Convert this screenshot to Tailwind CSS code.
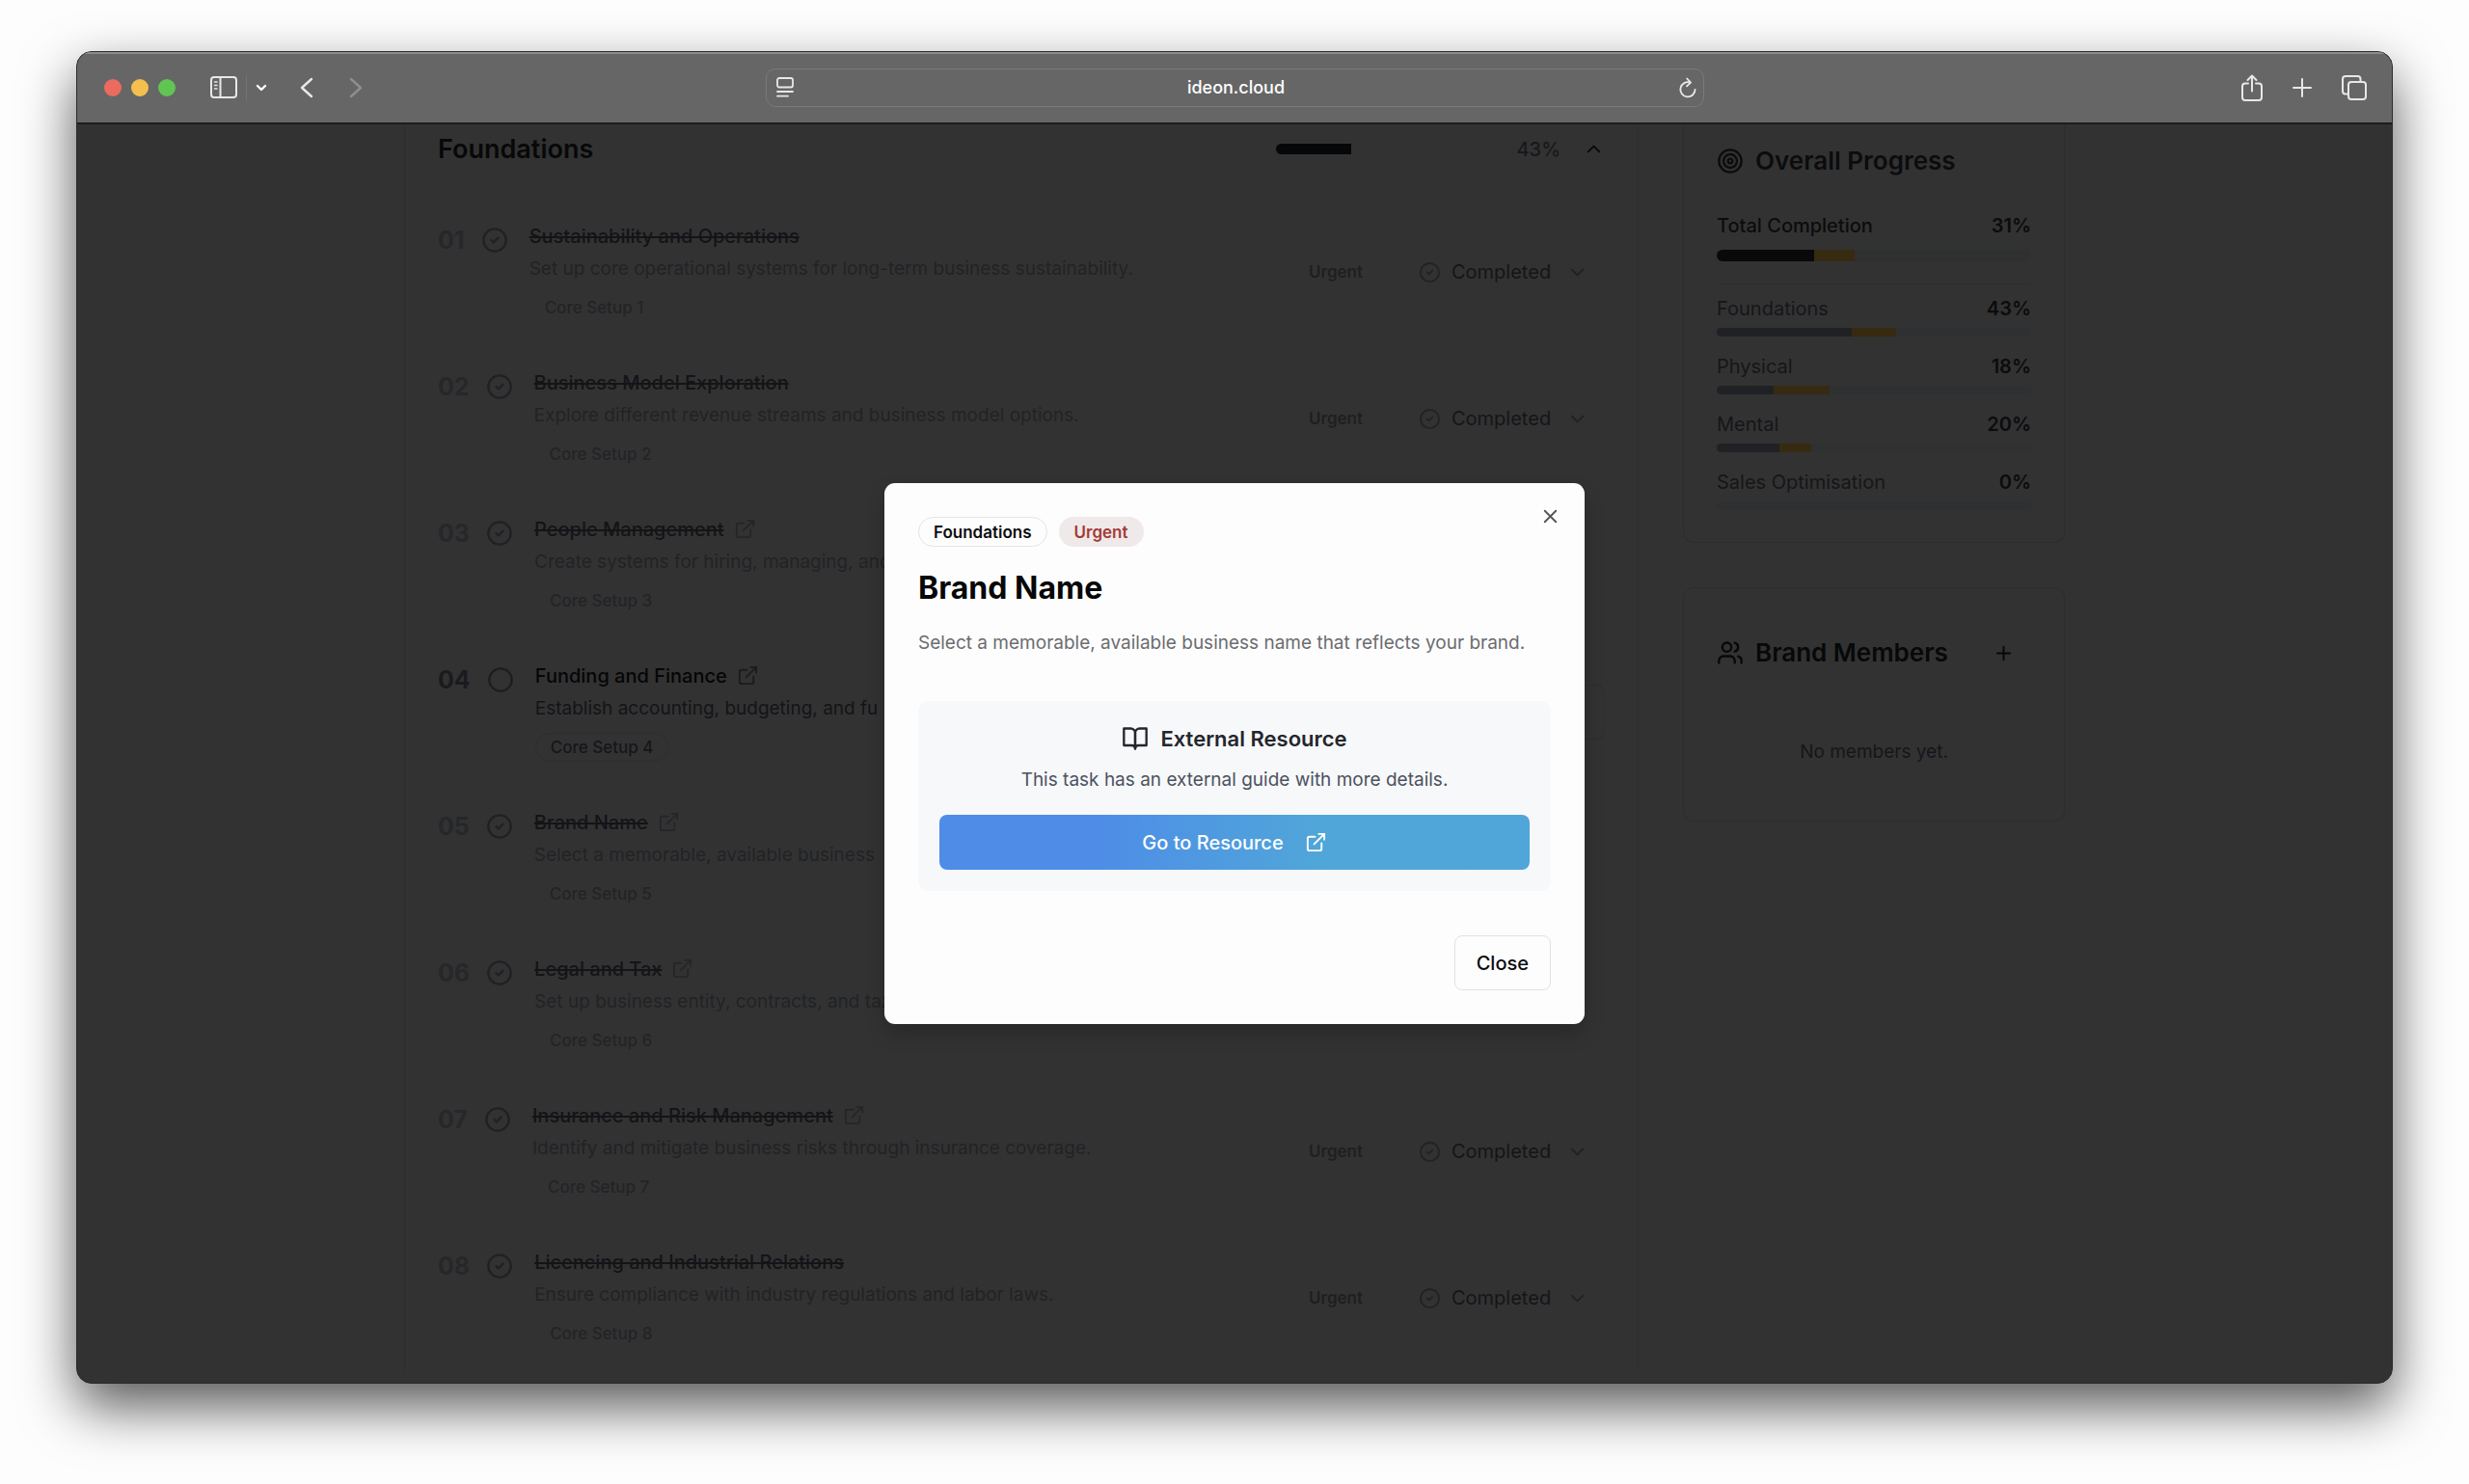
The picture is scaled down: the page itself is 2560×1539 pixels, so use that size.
<!DOCTYPE html>
<html lang="en">
<head>
    <meta charset="UTF-8">
    <meta name="viewport" content="width=device-width, initial-scale=1.0">
    <title>Foundations - Ideon</title>
    <script src="https://cdn.jsdelivr.net/npm/@tailwindcss/browser@4"></script>
    <style>
        body {
            font-family: Inter, "Liberation Sans", sans-serif;
        }
    </style>
</head>
<body class="flex h-screen flex-col bg-[#fdfdfd] px-[79px] pt-[53px] pb-[104px]">

    <!-- Icon sprite -->
    <svg class="hidden" xmlns="http://www.w3.org/2000/svg">
        <symbol id="check" viewBox="0 0 24 24"><circle cx="12" cy="12" r="10"/><path d="m9 12 2 2 4-4"/></symbol>
        <symbol id="circle" viewBox="0 0 24 24"><circle cx="12" cy="12" r="10"/></symbol>
        <symbol id="external" viewBox="0 0 24 24"><path d="M15 3h6v6"/><path d="M10 14 21 3"/><path d="M18 13v6a2 2 0 0 1-2 2H5a2 2 0 0 1-2-2V8a2 2 0 0 1 2-2h6"/></symbol>
        <symbol id="down" viewBox="0 0 24 24"><path d="m6 9 6 6 6-6"/></symbol>
        <symbol id="up" viewBox="0 0 24 24"><path d="m18 15-6-6-6 6"/></symbol>
        <symbol id="plus" viewBox="0 0 24 24"><path d="M5 12h14"/><path d="M12 5v14"/></symbol>
        <symbol id="close" viewBox="0 0 24 24"><path d="M18 6 6 18"/><path d="m6 6 12 12"/></symbol>
        <symbol id="target" viewBox="0 0 24 24"><circle cx="12" cy="12" r="10"/><circle cx="12" cy="12" r="6"/><circle cx="12" cy="12" r="2"/></symbol>
        <symbol id="users" viewBox="0 0 24 24"><path d="M16 21v-2a4 4 0 0 0-4-4H6a4 4 0 0 0-4 4v2"/><circle cx="9" cy="7" r="4"/><path d="M22 21v-2a4 4 0 0 0-3-3.87"/><path d="M16 3.13a4 4 0 0 1 0 7.75"/></symbol>
        <symbol id="book" viewBox="0 0 24 24"><path d="M2 3h6a4 4 0 0 1 4 4v14a3 3 0 0 0-3-3H2z"/><path d="M22 3h-6a4 4 0 0 0-4 4v14a3 3 0 0 1 3-3h7z"/></symbol>
    </svg>

    <div class="flex min-h-0 flex-1 flex-col overflow-hidden rounded-[16px] border border-[#2b2b2b] bg-[#323232] shadow-[0_24px_56px_rgba(0,0,0,0.65)]">

        <!-- Browser toolbar -->
        <header class="grid h-[75px] shrink-0 grid-cols-[1fr_973px_1fr] items-center border-t-2 border-b-2 border-t-[#8c8c8c] border-b-[#1c1c1e] bg-[#666666] pb-[2px] text-[#e8e8e8]">
            <div class="flex items-center pl-[28px]">
                <div class="flex gap-[10px]">
                    <span class="size-[18px] rounded-full bg-[#ed6a5e]"></span>
                    <span class="size-[18px] rounded-full bg-[#f4bf4f]"></span>
                    <span class="size-[18px] rounded-full bg-[#61c554]"></span>
                </div>
                <button class="ml-[36px]" aria-label="Sidebar">
                    <svg class="h-[23px] w-[28px]" viewBox="0 0 28 23" fill="none" stroke="currentColor" stroke-width="2" stroke-linecap="round"><rect x="1" y="1" width="26" height="21" rx="3"/><path d="M10.500 1v21"/><path d="M4.500 6h2.500M4.500 9.500h2.500M4.500 13h2.500" stroke-width="1.500"/></svg>
                </button>
                <span class="ml-[9px] h-[26px] w-px bg-[#747474]"></span>
                <button class="ml-[9px]" aria-label="Tab groups">
                    <svg class="h-[8px] w-[12px]" viewBox="0 0 12 8" fill="none" stroke="#fff" stroke-width="2.400" stroke-linecap="round" stroke-linejoin="round"><path d="m2 2 4 4 4-4"/></svg>
                </button>
                <button class="ml-[34px]" aria-label="Back">
                    <svg class="h-[22px] w-[14px]" viewBox="0 0 14 22" fill="none" stroke="currentColor" stroke-width="2.400" stroke-linecap="round" stroke-linejoin="round"><path d="M12 2 2 11l10 9"/></svg>
                </button>
                <button class="ml-[37px] text-[#8e8e8e]" aria-label="Forward">
                    <svg class="h-[22px] w-[14px]" viewBox="0 0 14 22" fill="none" stroke="currentColor" stroke-width="2.400" stroke-linecap="round" stroke-linejoin="round"><path d="m2 2 10 9-10 9"/></svg>
                </button>
            </div>
            <div class="flex h-[40px] items-center rounded-[10px] border border-[#7a7a7a] pr-[7px] pl-[10px]">
                <svg class="h-[21px] w-[18px]" viewBox="0 0 18 21" fill="none" stroke="currentColor" stroke-width="1.800" stroke-linecap="round"><rect x="1" y="1" width="16" height="9.500" rx="2"/><path d="M1 15h16M1 19.700h11"/></svg>
                <input class="min-w-0 flex-1 bg-transparent text-center text-[18px] font-medium text-white" aria-label="Address" value="ideon.cloud">
                <button aria-label="Reload">
                    <svg class="h-[22px] w-[18px]" viewBox="0 0 18 22" fill="none" stroke="currentColor" stroke-width="1.800" stroke-linecap="round" stroke-linejoin="round"><path d="M11.500 5.600A7.600 7.600 0 1 0 16.600 12.800"/><path d="M8.200 1.500 12 5.700 8 9.300"/></svg>
                </button>
            </div>
            <div class="flex items-center justify-end gap-[31px] pr-[26px]">
                <button aria-label="Share">
                    <svg class="h-[28px] w-[22px]" viewBox="0 0 22 28" fill="none" stroke="currentColor" stroke-width="2" stroke-linecap="round" stroke-linejoin="round"><path d="M7 9.500H4a3 3 0 0 0-3 3V24a3 3 0 0 0 3 3h14a3 3 0 0 0 3-3V12.500a3 3 0 0 0-3-3h-3M11 17.500V2M6.500 6 11 1.500 15.500 6"/></svg>
                </button>
                <button aria-label="New tab">
                    <svg class="size-[20px]" viewBox="0 0 20 20" fill="none" stroke="currentColor" stroke-width="2" stroke-linecap="round"><path d="M10 1v18M1 10h18"/></svg>
                </button>
                <button aria-label="Tab overview">
                    <svg class="size-[26px]" viewBox="0 0 26 26" fill="none" stroke="currentColor" stroke-width="2" stroke-linecap="round"><rect x="7" y="7" width="18" height="18" rx="3"/><path d="M7 19.500H4a3 3 0 0 1-3-3V4a3 3 0 0 1 3-3h12.500a3 3 0 0 1 3 3v3"/></svg>
                </button>
            </div>
        </header>

        <div class="relative min-h-0 flex-1 overflow-hidden">
            <main class="mx-auto grid max-w-[1722px] grid-cols-[1fr_396px] gap-[46px] text-[20px] leading-[28px]">

                <section class="border-x border-[#2c2d2e] px-[34px]">
                    <div class="flex h-[51px] items-center">
                        <h2 class="flex-1 text-[27px] font-semibold text-[#070809]">Foundations</h2>
                        <div class="h-[11px] w-[181px] overflow-hidden rounded-full">
                            <div class="h-full bg-[#060708]" style="width: 43%"></div>
                        </div>
                        <span class="w-[114px] text-right font-medium text-[#17181c]">43%</span>
                        <button class="ml-[23px]" aria-label="Collapse">
                            <svg class="size-[23px]" fill="none" stroke="#070809" stroke-width="2" stroke-linecap="round" stroke-linejoin="round"><use href="#up"/></svg>
                        </button>
                    </div>
                    <ul id="taskList" class="pt-[26px]"></ul>
                </section>

                <aside class="flex flex-col gap-[46px]">
                    <section class="rounded-b-[11px] border border-t-0 border-[#2c2d2e] px-[34px] pb-[33px]">
                        <h2 class="flex h-[75px] items-center gap-[12px] text-[26px] font-semibold text-[#0b0c0e]">
                            <svg class="size-[28px]" fill="none" stroke="currentColor" stroke-width="2"><use href="#target"/></svg>
                            Overall Progress
                        </h2>
                        <div class="mt-[16px] flex justify-between font-medium text-[#0b0c0e]">
                            <span>Total Completion</span>
                            <span class="font-semibold">31%</span>
                        </div>
                        <div class="mt-[11px] flex h-[12px] overflow-hidden rounded-full bg-[#2e3032]">
                            <div class="bg-[#08090a]" style="width: 31%"></div>
                            <div class="bg-[#362b11]" style="width: 13%"></div>
                        </div>
                        <div id="progressList" class="mt-[23px] flex flex-col gap-[17px] border-t border-[#2d2e2f] pt-[11px]"></div>
                    </section>

                    <section class="rounded-[11px] border border-[#2c2d2e] px-[34px] pt-[34px] pb-[57px]">
                        <div class="flex h-[66px] items-center justify-between">
                            <h2 class="flex items-center gap-[12px] text-[26px] font-semibold text-[#070809]">
                                <svg class="size-[28px]" fill="none" stroke="currentColor" stroke-width="2" stroke-linecap="round" stroke-linejoin="round"><use href="#users"/></svg>
                                Brand Members
                            </h2>
                            <button class="flex size-[57px] items-center justify-center" aria-label="Add member">
                                <svg class="size-[23px]" fill="none" stroke="#070809" stroke-width="2" stroke-linecap="round"><use href="#plus"/></svg>
                            </button>
                        </div>
                        <p class="mt-[56px] text-center text-[19px] text-[#15161a]">No members yet.</p>
                    </section>
                </aside>
            </main>

            <!-- Task dialog -->
            <div class="absolute inset-0 flex items-center justify-center">
                <div role="dialog" aria-labelledby="dialogTitle" class="relative w-[726px] rounded-[11px] bg-[#fdfdfd] p-[35px] text-[20px] leading-[28px] shadow-[0_10px_20px_rgba(0,0,0,0.2)]">
                    <button class="absolute top-[23px] right-[24px]" aria-label="Dismiss">
                        <svg class="size-[23px]" fill="none" stroke="#55565a" stroke-width="2" stroke-linecap="round"><use href="#close"/></svg>
                    </button>
                    <div class="flex gap-[12px] text-[17px] font-semibold">
                        <span class="flex h-[31px] items-center rounded-full border border-[#e4e4e7] px-[15px] text-[#0b0c0e]">Foundations</span>
                        <span class="flex h-[31px] items-center rounded-full bg-[#efe9e9] px-[16px] text-[#a23a36]">Urgent</span>
                    </div>
                    <h1 id="dialogTitle" class="mt-[23px] text-[32px] leading-[40px] font-bold text-[#060708]">Brand Name</h1>
                    <p class="mt-[23px] text-[19px] text-[#6b6c70]">Select a memorable, available business name that reflects your brand.</p>

                    <div class="mt-[46px] rounded-[11px] bg-[#f7f8fa] p-[22px] text-center">
                        <h3 class="flex h-[34px] items-center justify-center gap-[12px] text-[22px] font-semibold text-[#24262c]">
                            <svg class="size-[28px]" fill="none" stroke="currentColor" stroke-width="2" stroke-linecap="round" stroke-linejoin="round"><use href="#book"/></svg>
                            External Resource
                        </h3>
                        <p class="mt-[12px] text-[19px] text-[#4b5260]">This task has an external guide with more details.</p>
                        <a href="#" class="mt-[22px] flex h-[57px] items-center justify-center gap-[22px] rounded-[8px] bg-linear-to-r from-[#4e8ce8] from-25% to-[#50a6d8] to-65% font-medium text-white">
                            Go to Resource
                            <svg class="size-[23px]" fill="none" stroke="currentColor" stroke-width="2" stroke-linecap="round" stroke-linejoin="round"><use href="#external"/></svg>
                        </a>
                    </div>

                    <div class="mt-[46px] flex justify-end">
                        <button class="h-[57px] rounded-[8px] border border-[#e4e0e2] px-[22px] font-medium text-[#0b0c0e]">Close</button>
                    </div>
                </div>
            </div>
        </div>
    </div>

    <script>
        const tasks = [
            { title: 'Sustainability and Operations', text: 'Set up core operational systems for long-term business sustainability.', done: true },
            { title: 'Business Model Exploration', text: 'Explore different revenue streams and business model options.', done: true },
            { title: 'People Management', text: 'Create systems for hiring, managing, and', done: true, link: true },
            { title: 'Funding and Finance', text: 'Establish accounting, budgeting, and fu', done: false, link: true },
            { title: 'Brand Name', text: 'Select a memorable, available business', done: true, link: true },
            { title: 'Legal and Tax', text: 'Set up business entity, contracts, and tax', done: true, link: true },
            { title: 'Insurance and Risk Management', text: 'Identify and mitigate business risks through insurance coverage.', done: true, link: true },
            { title: 'Licencing and Industrial Relations', text: 'Ensure compliance with industry regulations and labor laws.', done: true },
        ];

        const sections = [
            { name: 'Foundations', done: 43, active: 14 },
            { name: 'Physical', done: 18, active: 18 },
            { name: 'Mental', done: 20, active: 10 },
            { name: 'Sales Optimisation', done: 0, active: 0 },
        ];

        const icon = (name, cls) =>
            `<svg class="${cls}" fill="none" stroke="currentColor" stroke-width="2" stroke-linecap="round" stroke-linejoin="round"><use href="#${name}"/></svg>`;

        document.getElementById('taskList').innerHTML = tasks.map((task, i) => {
            const n = i + 1;
            const status = task.done ? 'Completed' : 'To do';
            return `
            <li class="flex h-[152px] items-center">
                <span class="mt-[25px] self-start text-[25px] leading-[36px] font-bold ${task.done ? 'text-[#26272a]' : 'text-[#1a1b1e]'}">0${n}</span>
                <button class="mt-[29px] ml-[17px] self-start ${task.done ? 'text-[#202124]' : 'text-[#1d1e21]'}" aria-label="${status}">${icon(task.done ? 'check' : 'circle', 'size-[28px]')}</button>
                <div class="ml-[22px] min-w-0 flex-1">
                    <h3 class="flex items-center gap-[10px] font-medium ${task.done ? 'text-[#131417]' : 'text-[#050607]'}">
                        <span class="${task.done ? 'line-through' : ''}">${task.title}</span>
                        ${task.link ? icon('external', task.done ? 'size-[23px] text-[#252629]' : 'size-[23px] text-[#1b1c1f]') : ''}
                    </h3>
                    <p class="mt-[6px] truncate text-[19px] ${task.done ? 'text-[#212326]' : 'text-[#131418]'}">${task.text}</p>
                    <span class="mt-[11px] inline-flex h-[30px] items-center rounded-full border px-[15px] text-[17px] font-medium ${task.done ? 'border-transparent text-[#222427]' : 'border-[#2c2e2f] text-[#15161a]'}">Core Setup ${n}</span>
                </div>
                <span class="text-[17px] font-semibold text-[#1f1f20]">Urgent</span>
                <div class="ml-[41px] flex h-[57px] w-[210px] items-center rounded-[8px] border px-[16px] ${task.done ? 'border-transparent' : 'border-[#2c2e2f]'}">
                    ${icon(task.done ? 'check' : 'circle', 'size-[23px] shrink-0 text-[#222326]')}
                    <select class="ml-[11px] min-w-0 flex-1 appearance-none text-[#141519]" aria-label="Status of ${task.title}"><option>${status}</option></select>
                    ${icon('down', 'size-[23px] shrink-0 text-[#202124]')}
                </div>
            </li>`;
        }).join('');

        document.getElementById('progressList').innerHTML = sections.map(s => `
            <div>
                <div class="flex justify-between">
                    <span class="text-[#15161a]">${s.name}</span>
                    <span class="font-semibold text-[#0b0c0e]">${s.done}%</span>
                </div>
                <div class="mt-[6px] flex h-[9px] overflow-hidden rounded-full bg-[#2e3032]">
                    <div class="bg-[#202124]" style="width: ${s.done}%"></div>
                    <div class="bg-[#362b11]" style="width: ${s.active}%"></div>
                </div>
            </div>`).join('');
    </script>
</body>
</html>
